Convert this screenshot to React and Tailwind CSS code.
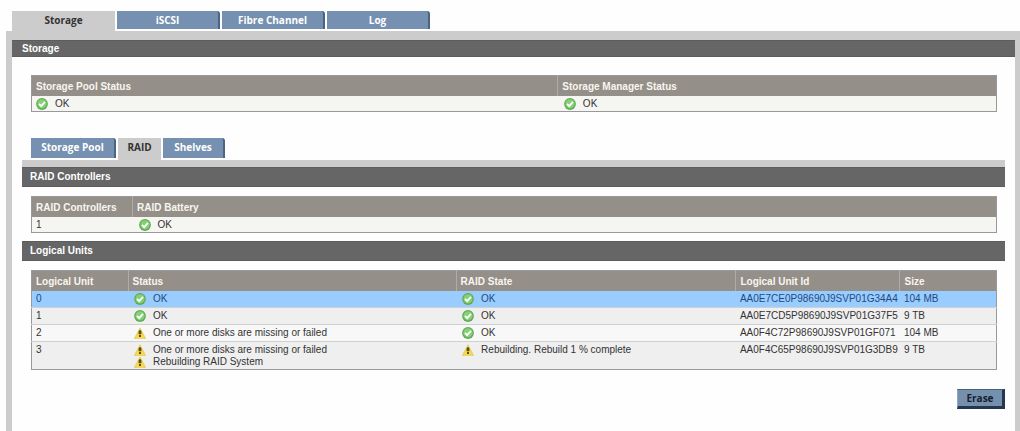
import React, { useState } from "react";

function OkIcon() {
  return (
    <svg className="h-3 w-3 shrink-0" viewBox="0 0 12 12" aria-hidden="true">
      <circle cx="6" cy="6" r="5.9" fill="#62ab56" />
      <circle cx="6" cy="5.8" r="4.6" fill="#84d074" />
      <path d="M3 5.8l2.2 2.4L9 3.9" fill="none" stroke="#fff" strokeWidth="1.8" />
    </svg>
  );
}

function WarnIcon() {
  return (
    <svg className="h-3 w-3 shrink-0" viewBox="0 0 12 12" aria-hidden="true">
      <path d="M6 0.8L11.8 11.6H0.2z" fill="#f3d94e" stroke="#e0c65c" strokeWidth="0.6" strokeLinejoin="round" />
      <path d="M4.6 4.2L6 2.8l1.4 1.4v3H4.6zM5 8h2v2H5z" fill="#5e4f14" />
    </svg>
  );
}

function Status({ kind, children }) {
  return (
    <span className="flex items-center gap-[7px]">
      {kind === "ok" ? <OkIcon /> : <WarnIcon />}
      <span>{children}</span>
    </span>
  );
}

function Tab({ active, onClick, className, children }) {
  const look = active
    ? "bg-[#cccccc] text-[#333333]"
    : "mb-0.5 rounded-tr-[3px] border-r-2 border-[#4a6582] bg-[#7590b0] text-white";
  return (
    <button
      type="button"
      role="tab"
      aria-selected={active}
      onClick={onClick}
      className={`flex items-start justify-center font-['Open_Sans',sans-serif] text-[10px] font-bold ${look} ${className}`}
    >
      {children}
    </button>
  );
}

function Bar({ className, children }) {
  return (
    <h2 className={`flex items-center border-y border-[#5c5c5c] bg-[#666666] font-bold text-white ${className}`}>
      {children}
    </h2>
  );
}

function DataTable({ columns, children }) {
  return (
    <table className="w-full table-fixed border-collapse border border-[#999999] text-left">
      <colgroup>
        {columns.map((c) => (
          <col key={c.label} className={c.width} />
        ))}
      </colgroup>
      <thead>
        <tr className="h-5 bg-[#958f89] text-[#f8f6ef]">
          {columns.map((c) => (
            <th key={c.label} scope="col" className="border-l border-[#b0aba5] px-1 pt-0.5 font-bold whitespace-nowrap first:border-l-0">
              {c.label}
            </th>
          ))}
        </tr>
      </thead>
      <tbody>{children}</tbody>
    </table>
  );
}

const units = [
  { id: "0", status: [["ok", "OK"]], state: ["ok", "OK"], uid: "AA0E7CE0P98690J9SVP01G34A4", size: "104 MB" },
  { id: "1", status: [["ok", "OK"]], state: ["ok", "OK"], uid: "AA0E7CD5P98690J9SVP01G37F5", size: "9 TB" },
  { id: "2", status: [["warn", "One or more disks are missing or failed"]], state: ["ok", "OK"], uid: "AA0F4C72P98690J9SVP01GF071", size: "104 MB" },
  {
    id: "3",
    status: [["warn", "One or more disks are missing or failed"], ["warn", "Rebuilding RAID System"]],
    state: ["warn", "Rebuilding. Rebuild 1 % complete"],
    uid: "AA0F4C65P98690J9SVP01G3DB9",
    size: "9 TB",
  },
];

export default function App() {
  const [tab, setTab] = useState("Storage");
  const [subTab, setSubTab] = useState("RAID");
  const [selected, setSelected] = useState("0");

  return (
    <div className="flex min-h-screen flex-col bg-[#fefefe] pt-[11px] pl-1.5 font-['Liberation_Sans',Arial,sans-serif] text-[10px] leading-3 text-[#333333]">
      <div role="tablist" aria-label="Main" className="flex h-5 gap-0.5 pl-1.5">
        {["Storage", "iSCSI", "Fibre Channel", "Log"].map((t) => (
          <Tab key={t} active={t === tab} onClick={() => setTab(t)} className="w-[103px] pt-[3px]">
            {t}
          </Tab>
        ))}
      </div>

      <main className="flex-1 border-t-9 border-r-5 border-l-6 border-[#cccccc]">
        <Bar className="h-[17px] pl-2.5">Storage</Bar>

        <section className="pt-[18px] pr-[18px] pl-[19px]">
          <DataTable
            columns={[
              { label: "Storage Pool Status", width: "w-6/11" },
              { label: "Storage Manager Status", width: "w-5/11" },
            ]}
          >
            <tr className="h-4 bg-[#f5f5f2]">
              <td className="px-1 pt-0.5"><Status kind="ok">OK</Status></td>
              <td className="px-1.5 pt-0.5"><Status kind="ok">OK</Status></td>
            </tr>
          </DataTable>
        </section>

        <section className="px-2.5 pt-[26px]">
          <div role="tablist" aria-label="Storage sections" className="flex h-[22px] gap-0.5 pl-[9px]">
            <Tab active={subTab === "Storage Pool"} onClick={() => setSubTab("Storage Pool")} className="w-[85px] pt-[3px]">Storage Pool</Tab>
            <Tab active={subTab === "RAID"} onClick={() => setSubTab("RAID")} className="w-[43px] pt-[3px]">RAID</Tab>
            <Tab active={subTab === "Shelves"} onClick={() => setSubTab("Shelves")} className="w-[62px] pt-[3px]">Shelves</Tab>
          </div>
          <div className="h-[7px] bg-[#cccccc]" />

          <Bar className="h-5 pl-2">RAID Controllers</Bar>
          <div className="pt-[9px] pr-2 pb-2 pl-[9px]">
            <DataTable
              columns={[
                { label: "RAID Controllers", width: "w-[101px]" },
                { label: "RAID Battery", width: "" },
              ]}
            >
              <tr className="h-4 bg-[#f5f5f2]">
                <td className="px-1 pt-0.5">1</td>
                <td className="px-1.5 pt-0.5"><Status kind="ok">OK</Status></td>
              </tr>
            </DataTable>
          </div>

          <Bar className="h-5 pl-2">Logical Units</Bar>
          <div className="pt-[9px] pr-2 pl-[9px]">
            <DataTable
              columns={[
                { label: "Logical Unit", width: "w-[10%]" },
                { label: "Status", width: "w-[34%]" },
                { label: "RAID State", width: "w-[29%]" },
                { label: "Logical Unit Id", width: "w-[17%]" },
                { label: "Size", width: "w-[10%]" },
              ]}
            >
              {units.map((u) => (
                <tr
                  key={u.id}
                  aria-selected={u.id === selected}
                  onClick={() => setSelected(u.id)}
                  className={`h-[17px] border-b border-[#d0d0d0] align-top last:h-7 last:border-[#999999] ${
                    u.id === selected ? "bg-[#99ccff] text-[#234a80]" : u.id === "2" ? "bg-[#f8f8f8]" : "bg-[#efefef]"
                  }`}
                >
                  <td className="px-1 pt-0.5">{u.id}</td>
                  <td className="px-1.5 pt-0.5">
                    {u.status.map(([kind, text]) => (
                      <Status key={text} kind={kind}>{text}</Status>
                    ))}
                  </td>
                  <td className="px-1.5 pt-0.5"><Status kind={u.state[0]}>{u.state[1]}</Status></td>
                  <td className="px-1 pt-0.5 whitespace-nowrap">{u.uid}</td>
                  <td className="px-1 pt-0.5">{u.size}</td>
                </tr>
              ))}
            </DataTable>
          </div>

          <div className="flex justify-end pt-[19px]">
            <button
              type="button"
              className="h-5 w-12 border-t border-r-3 border-b-3 border-l border-t-[#4a6076] border-r-[#23384f] border-b-[#23384f] border-l-[#8fa6bc] bg-[#7590ac] font-['Open_Sans',sans-serif] text-[10px] leading-3 font-bold text-[#15202c]"
            >
              Erase
            </button>
          </div>
        </section>
      </main>
    </div>
  );
}
